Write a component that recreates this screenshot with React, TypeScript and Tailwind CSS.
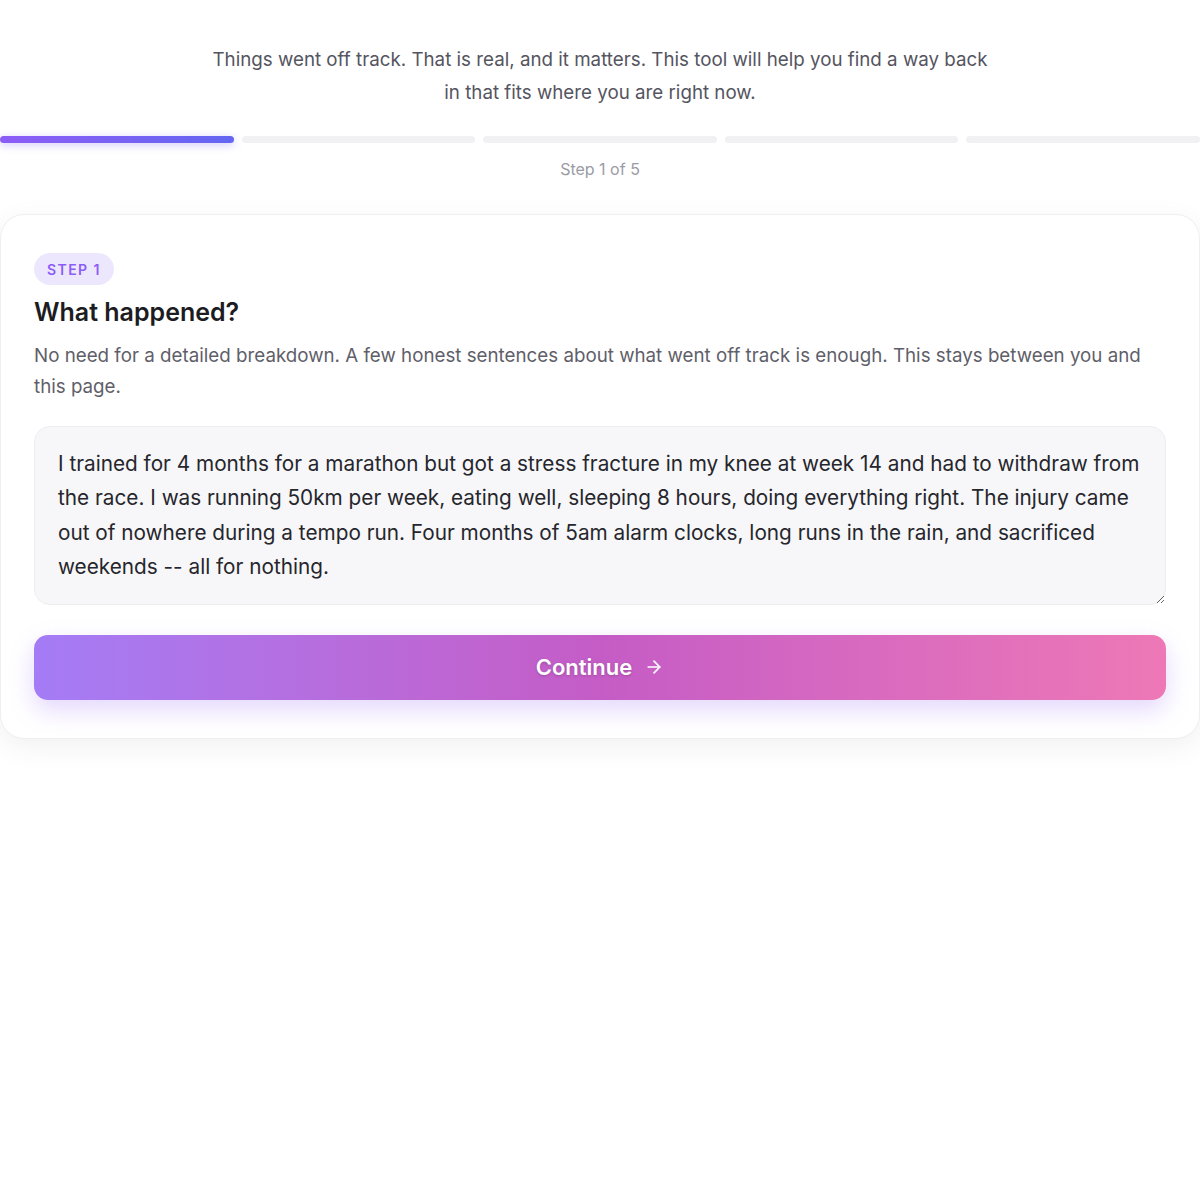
import React, { useState } from 'react';

const story =
  'I trained for 4 months for a marathon but got a stress fracture in my knee at week 14 and had to withdraw from the race. I was running 50km per week, eating well, sleeping 8 hours, doing everything right. The injury came out of nowhere during a tempo run. Four months of 5am alarm clocks, long runs in the rain, and sacrificed weekends -- all for nothing.';

const TOTAL_STEPS = 5;

function ProgressBar({ step }: { step: number }) {
  return (
    <div className="flex gap-2">
      {Array.from({ length: TOTAL_STEPS }).map((_, i) => (
        <div
          key={i}
          className={
            i < step
              ? 'h-[7px] flex-1 rounded-full bg-gradient-to-r from-[#8b5cf6] to-[#6366f1] shadow-[0_2px_8px_rgba(124,92,246,0.35)]'
              : 'h-[7px] flex-1 rounded-full bg-[#f1f1f4]'
          }
        />
      ))}
    </div>
  );
}

export default function App() {
  const [text, setText] = useState(story);
  const step = 1;

  return (
    <div className="min-h-screen bg-white font-['Inter',sans-serif] text-[#1c1c22]">
      <p className="mx-auto max-w-[784px] pt-[43px] text-center text-[18.75px] leading-[33px] text-[#55555f]">
        Things went off track. That is real, and it matters. This tool will help you find a way back in that fits where
        you are right now.
      </p>

      <div className="mt-[27px]">
        <ProgressBar step={step} />
      </div>
      <div className="mt-[14px] text-center text-[16px] text-[#9b9ba6]">
        Step {step} of {TOTAL_STEPS}
      </div>

      <div className="mt-[33px] rounded-[24px] border border-[#efeff3] bg-white px-[33px] pt-[38px] pb-[38px] shadow-[0_8px_30px_rgba(20,20,40,0.06)]">
        <span className="inline-block rounded-full bg-[#ede7fe] px-[13px] py-[5.5px] text-[14px] font-semibold tracking-[0.1em] text-[#8b5cf6]">
          STEP 1
        </span>
        <h2 className="mt-[9px] text-[25px] font-semibold text-[#1c1c22]">What happened?</h2>
        <p className="mt-[8px] text-[18.75px] leading-[31px] text-[#5f5f6a]">
          No need for a detailed breakdown. A few honest sentences about what went off track is enough. This stays
          between you and this page.
        </p>

        <textarea
          value={text}
          onChange={e => setText(e.target.value)}
          className="mt-[24px] block h-[179px] w-full rounded-[16px] border border-[#eeeef2] bg-[#f7f7f9] pl-[23px] pr-[16px] pt-[20px] pb-[16px] text-[20.75px] leading-[34.5px] text-[#26262c] outline-none"
        />

        <button className="mt-[30px] flex h-[65px] w-full items-center justify-center gap-3 rounded-[14px] bg-gradient-to-r from-[#a47cf6] via-[#c55cc6] to-[#ee78b6] text-[22px] font-semibold text-white shadow-[0_10px_24px_rgba(167,124,246,0.3)] [text-shadow:0_1px_3px_rgba(0,0,0,0.2)]">
          Continue
          <svg width="20" height="20" viewBox="0 0 24 24" fill="none" stroke="currentColor" strokeWidth="2" strokeLinecap="round" strokeLinejoin="round">
            <path d="M5 12h14" />
            <path d="m12 5 7 7-7 7" />
          </svg>
        </button>
      </div>
    </div>
  );
}
